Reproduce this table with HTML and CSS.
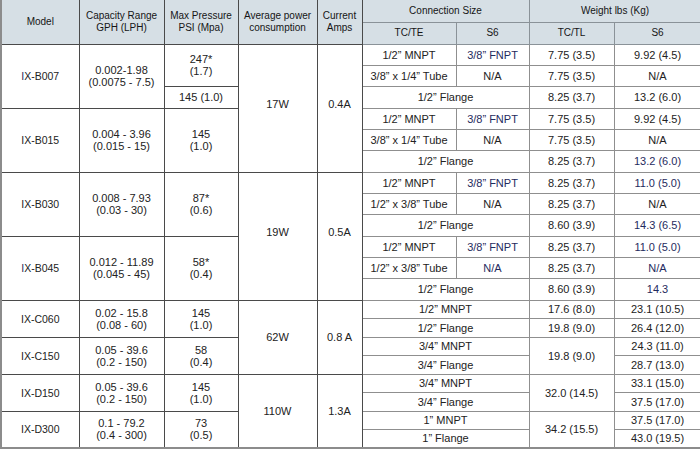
FILE: index.html
```html
<!DOCTYPE html>
<html>
<head>
<meta charset="utf-8">
<link rel="stylesheet" href="styles.css">
</head>
<body>
<table class="spec">
<colgroup>
<col class="c1"><col class="c2"><col class="c3"><col class="c4"><col class="c5"><col class="c6"><col class="c7"><col class="c8"><col class="c9">
</colgroup>
<thead>
<tr class="h22">
<th rowspan="2" class="l">Model</th>
<th rowspan="2" class="l">Capacity Range<br>GPH (LPH)</th>
<th rowspan="2" class="l">Max Pressure<br>PSI (Mpa)</th>
<th rowspan="2" class="l">Average power<br>consumption</th>
<th rowspan="2" class="l">Current<br>Amps</th>
<th colspan="2">Connection Size</th>
<th colspan="2">Weight lbs (Kg)</th>
</tr>
<tr class="h22">
<th>TC/TE</th><th>S6</th><th>TC/TL</th><th>S6</th>
</tr>
</thead>
<tbody>
<!-- IX-B007 -->
<tr class="h21">
<td rowspan="3" class="l md"><span class="nv">I</span>X-B007</td>
<td rowspan="3" class="l">0.002-1.98<br>(0.0075 - 7.5)</td>
<td rowspan="2" class="l">247*<br>(1.7)</td>
<td rowspan="6" class="l pw">17W</td>
<td rowspan="6" class="l pw">0.4A</td>
<td>1/2” MNPT</td><td class="nv">3/8” FNPT</td><td>7.75 (3.5)</td><td>9.92 (4.5)</td>
</tr>
<tr class="h21">
<td>3/8” x 1/4” Tube</td><td>N/A</td><td>7.75 (3.5)</td><td>N/A</td>
</tr>
<tr class="h22">
<td class="l">145 (1.0)</td>
<td colspan="2">1/2” Flange</td><td>8.25 (3.7)</td><td>13.2 (6.0)</td>
</tr>
<!-- IX-B015 -->
<tr class="h21">
<td rowspan="3" class="l md">IX-B015</td>
<td rowspan="3" class="l">0.004 - 3.96<br>(0.015 - 15)</td>
<td rowspan="3" class="l">145<br>(1.0)</td>
<td>1/2” MNPT</td><td class="nv">3/8” FNPT</td><td>7.75 (3.5)</td><td>9.92 (4.5)</td>
</tr>
<tr class="h21">
<td>3/8” x 1/4” Tube</td><td>N/A</td><td>7.75 (3.5)</td><td>N/A</td>
</tr>
<tr class="h22">
<td colspan="2">1/2” Flange</td><td>8.25 (3.7)</td><td class="nv">13.2 (6.0)</td>
</tr>
<!-- IX-B030 -->
<tr class="h21">
<td rowspan="3" class="l md">IX-B030</td>
<td rowspan="3" class="l">0.008 - 7.93<br>(0.03 - 30)</td>
<td rowspan="3" class="l">87*<br>(0.6)</td>
<td rowspan="6" class="l pw">19W</td>
<td rowspan="6" class="l pw">0.5A</td>
<td>1/2” MNPT</td><td class="nv">3/8” FNPT</td><td>8.25 (3.7)</td><td class="nv">11.0 (5.0)</td>
</tr>
<tr class="h21">
<td>1/2” x 3/8” Tube</td><td>N/A</td><td>8.25 (3.7)</td><td>N/A</td>
</tr>
<tr class="h22">
<td colspan="2">1/2” Flange</td><td>8.60 (3.9)</td><td class="nv">14.3 (6.5)</td>
</tr>
<!-- IX-B045 -->
<tr class="h21">
<td rowspan="3" class="l md"><span class="nv">I</span>X-B045</td>
<td rowspan="3" class="l">0.012 - 11.89<br>(0.045 - 45)</td>
<td rowspan="3" class="l">58*<br>(0.4)</td>
<td>1/2” MNPT</td><td class="nv">3/8” FNPT</td><td>8.25 (3.7)</td><td class="nv">11.0 (5.0)</td>
</tr>
<tr class="h21">
<td>1/2” x 3/8” Tube</td><td class="nv">N/A</td><td>8.25 (3.7)</td><td class="nv">N/A</td>
</tr>
<tr class="h22">
<td colspan="2">1/2” Flange</td><td>8.60 (3.9)</td><td class="nv">14.3</td>
</tr>
<!-- IX-C060 -->
<tr class="h18">
<td rowspan="2" class="l md">IX-C060</td>
<td rowspan="2" class="l">0.02 - 15.8<br>(0.08 - 60)</td>
<td rowspan="2" class="l">145<br>(1.0)</td>
<td rowspan="4" class="l">62W</td>
<td rowspan="4" class="l">0.8 A</td>
<td colspan="2">1/2” MNPT</td><td>17.6 (8.0)</td><td>23.1 (10.5)</td>
</tr>
<tr class="h19">
<td colspan="2">1/2” Flange</td><td>19.8 (9.0)</td><td>26.4 (12.0)</td>
</tr>
<!-- IX-C150 -->
<tr class="h18">
<td rowspan="2" class="l md">IX-C150</td>
<td rowspan="2" class="l">0.05 - 39.6<br>(0.2 - 150)</td>
<td rowspan="2" class="l">58<br>(0.4)</td>
<td colspan="2">3/4” MNPT</td><td rowspan="2">19.8 (9.0)</td><td>24.3 (11.0)</td>
</tr>
<tr class="h19">
<td colspan="2">3/4” Flange</td><td>28.7 (13.0)</td>
</tr>
<!-- IX-D150 -->
<tr class="h18">
<td rowspan="2" class="l md">IX-D150</td>
<td rowspan="2" class="l">0.05 - 39.6<br>(0.2 - 150)</td>
<td rowspan="2" class="l">145<br>(1.0)</td>
<td rowspan="4" class="l">110W</td>
<td rowspan="4" class="l">1.3A</td>
<td colspan="2">3/4” MNPT</td><td rowspan="2">32.0 (14.5)</td><td>33.1 (15.0)</td>
</tr>
<tr class="h19">
<td colspan="2">3/4” Flange</td><td>37.5 (17.0)</td>
</tr>
<!-- IX-D300 -->
<tr class="h18">
<td rowspan="2" class="l md">IX-D300</td>
<td rowspan="2" class="l">0.1 - 79.2<br>(0.4 - 300)</td>
<td rowspan="2" class="l">73<br>(0.5)</td>
<td colspan="2">1” MNPT</td><td rowspan="2">34.2 (15.5)</td><td>37.5 (17.0)</td>
</tr>
<tr class="h19">
<td colspan="2">1” Flange</td><td>43.0 (19.5)</td>
</tr>
</tbody>
</table>
</body>
</html>
```

FILE: styles.css
```css
html, body {
  margin: 0;
  padding: 0;
  background: #ffffff;
}
.spec {
  width: 700px;
  table-layout: fixed;
  border-collapse: collapse;
  font-family: "Liberation Sans", Arial, sans-serif;
  font-size: 11px;
  line-height: 12px;
  color: #222222;
  border-left: 2px solid #8c8c8c;
  border-bottom: 2px solid #8c8c8c;
}
.c1 { width: 78px; }
.c2 { width: 85px; }
.c3 { width: 74px; }
.c4 { width: 79px; }
.c5 { width: 45px; }
.c6 { width: 94px; }
.c7 { width: 73px; }
.c8 { width: 85px; }
.c9 { width: 87px; }
th, td {
  padding: 0;
  text-align: center;
  vertical-align: middle;
  border: 1px solid #8f8f8f;
  white-space: nowrap;
}
th {
  background: #d6dfe5;
  font-weight: normal;
  font-size: 10px;
  color: #151515;
  border-color: #8a9298;
}
td.l, th.l {
  border-color: #4a4a4a;
}
.spec thead tr:first-child th {
  border-top: none;
}
.h22 { height: 22px; }
.h21 { height: 21px; }
.h19 { height: 19px; }
.h18 { height: 18px; }
.nv { color: #1f2b5e; }
.md { font-size: 10.5px; }
.pw { padding-bottom: 8px; }
```
